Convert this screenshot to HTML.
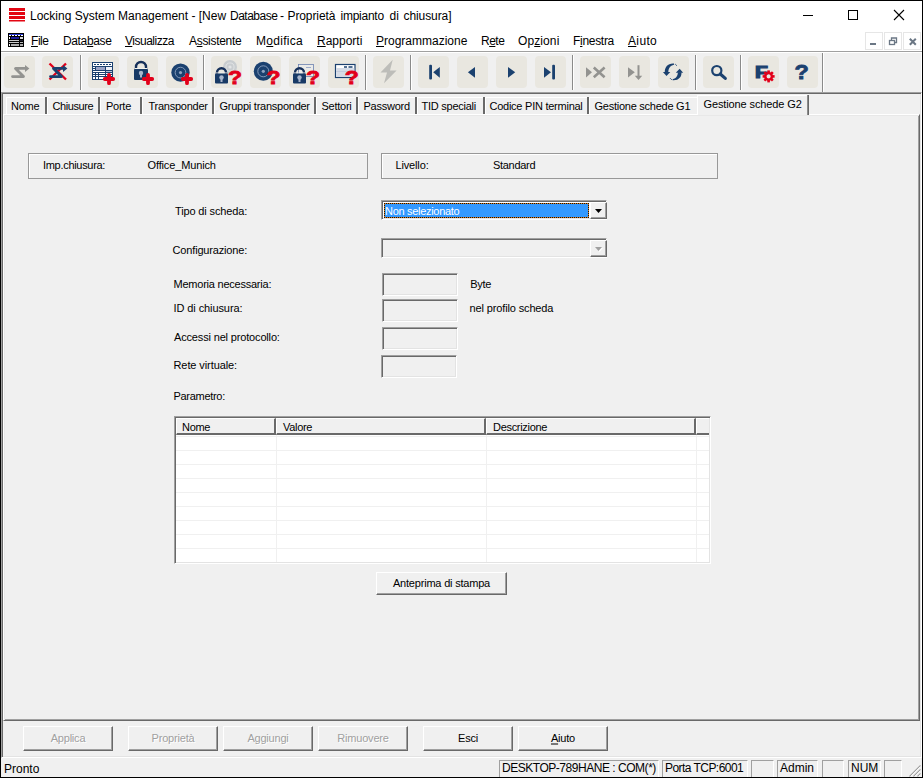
<!DOCTYPE html>
<html lang="it">
<head>
<meta charset="utf-8">
<title>Locking System Management</title>
<style>
*{box-sizing:border-box;margin:0;padding:0}
html,body{width:923px;height:778px;overflow:hidden;background:#f0f0f0}
body{position:relative;font-family:"Liberation Sans",sans-serif;font-size:11px;color:#000;line-height:1;letter-spacing:-0.3px}
.a{position:absolute;white-space:nowrap}
u{text-decoration:underline;text-underline-offset:1px}
/* window frame */
#frame{left:0;top:0;width:923px;height:778px;border:1px solid #000;pointer-events:none;z-index:50}
#title{left:1px;top:1px;width:921px;height:30px;background:#fff}
#menu{left:1px;top:31px;width:921px;height:20px;background:#fff}
.t12{font-size:12px;letter-spacing:0}
.mi{top:35px}
.tt{top:10px}
#toolbar{left:1px;top:51px;width:921px;height:41px;background:#f0f0f0;border-top:1px solid #a0a0a0;box-shadow:inset 0 1px 0 #fff,inset -1px 0 0 #fff}
.tb{position:absolute;top:56px;width:31px;height:32px;background:#e9e7e0;border-radius:4px}
.tb svg{position:absolute;left:0;top:0}
.sep{position:absolute;top:55px;width:2px;height:35px;border-left:1px solid #8a8a8a;border-right:1px solid #fff}
/* mdi */
#mdi{left:1px;top:92px;width:921px;height:666px;border:1px solid;border-color:#a0a0a0 #fff #fff #a0a0a0;box-shadow:inset 1px 1px 0 #696969,inset -1px -1px 0 #e3e3e3;background:#f0f0f0}
.tab{position:absolute;top:106px;letter-spacing:-0.25px;transform:translateY(-50%);font-size:11px}
.tsep{position:absolute;top:97px;width:2px;height:17px;background:#696969}
.tbd{position:absolute;top:97px;height:17px;border-top:1px solid #fff;border-left:1px solid #fff}
#page{left:3px;top:114px;width:917px;height:607px;border:1px solid;border-color:#fff #696969 #696969 #fff;box-shadow:inset 1px 1px 0 #e8e8e8,inset -1px -1px 0 #a0a0a0}
.sunk{position:absolute;border:1px solid #989898;box-shadow:inset 1px 1px 0 #fff}
.lbl{position:absolute;white-space:nowrap;transform:translateY(-50%)}
.edit{position:absolute;border:1px solid;border-color:#a0a0a0 #fff #fff #a0a0a0;box-shadow:inset 1px 1px 0 #696969, inset -1px -1px 0 #e3e3e3;background:#f0f0f0}
.btn{letter-spacing:-0.2px;position:absolute;border:1px solid;border-color:#fff #696969 #696969 #fff;box-shadow:inset -1px -1px 0 #a0a0a0;background:#f0f0f0;text-align:center}
.btn span{position:absolute;left:0;right:0;top:50%;transform:translateY(-50%);margin-top:-1px}
.dis{color:#a0a0a0;text-shadow:1px 1px 0 #fff}
#status{left:1px;top:758px;width:921px;height:19px;background:#f0f0f0}
.sp{position:absolute;top:760px;height:17px;border-top:1px solid #a0a0a0;border-left:1px solid #a0a0a0;border-right:1px solid #fff;font-size:12px;padding-left:2px;line-height:15px;white-space:nowrap;letter-spacing:0;overflow:hidden}
.hd{top:418px;height:17px;background:#f0f0f0;border-top:1px solid #fff;border-left:1px solid #fff;border-right:2px solid #696969;border-bottom:2px solid #696969;padding:3px 0 0 6px;line-height:11px}
.cb{width:17px;height:17px;background:#f0f0f0;border:1px solid;border-color:#fff #696969 #696969 #fff;box-shadow:inset -1px -1px 0 #a0a0a0}
</style>
</head>
<body>
<div class="a" id="title"></div>
<svg class="a" style="left:9px;top:8px" width="17" height="14" viewBox="0 0 17 14"><rect x="0" y="0" width="16" height="3" fill="#e30613"/><rect x="0" y="4" width="16" height="3" fill="#e30613"/><rect x="0" y="8" width="16" height="3" fill="#e30613"/><rect x="0" y="12" width="16" height="1.5" fill="#e30613"/></svg>
<div class="a t12 tt" id="ttA" style="left:30px">Locking System Management - [New</div>
<div class="a t12 tt" id="ttB" style="left:230px;letter-spacing:-0.5px">Database</div>
<div class="a t12 tt" id="ttC" style="left:280px">-</div>
<div class="a t12 tt" id="ttD" style="left:287.500px;letter-spacing:-0.1px">Proprietà</div>
<div class="a t12 tt" id="ttE" style="left:340.500px;letter-spacing:-0.25px">impianto</div>
<div class="a t12 tt" id="ttF" style="left:389.500px">di</div>
<div class="a t12 tt" id="ttG" style="left:403.500px;letter-spacing:-0.08px">chiusura]</div>
<svg class="a" style="left:800px;top:8px" width="110" height="16" viewBox="0 0 110 16" fill="none" stroke="#000" stroke-width="1"><path d="M3 7.500H13"/><rect x="48.500" y="2.500" width="9" height="9"/><path d="M94 2L104 12M104 2L94 12" stroke-width="1.100"/></svg>
<div class="a" id="menu"></div>
<svg class="a" style="left:8px;top:33px" width="16" height="14" viewBox="0 0 16 14"><rect x="0" y="0" width="16" height="14" fill="#000"/><rect x="1" y="1" width="14" height="1" fill="#2a3bd8"/><path d="M1 2.500h14" stroke="#fff" stroke-width="1" stroke-dasharray="2 1"/><rect x="1" y="4" width="1" height="2" fill="#fff"/><rect x="3" y="4" width="8" height="2" fill="#1c1c9c"/><rect x="12" y="4" width="3" height="2" fill="#ddd"/><rect x="1" y="7" width="10" height="1" fill="#c8c8c8"/><rect x="12" y="7" width="3" height="1" fill="#223"/><rect x="1" y="9" width="10" height="1" fill="#c8c8c8"/><rect x="12" y="9" width="3" height="1" fill="#bbb"/><rect x="1" y="11" width="1" height="2" fill="#fff"/><rect x="3" y="11" width="8" height="2" fill="#aaa"/><rect x="12" y="11" width="3" height="2" fill="#aaa"/></svg>
<div class="a t12 mi" id="m1" style="left:31px;letter-spacing:-0.45px"><u>F</u>ile</div>
<div class="a t12 mi" id="m2" style="left:63px;letter-spacing:-0.36px">Data<u>b</u>ase</div>
<div class="a t12 mi" id="m3" style="left:125px;letter-spacing:-0.5px"><u>V</u>isualizza</div>
<div class="a t12 mi" id="m4" style="left:189px;letter-spacing:-0.3px">A<u>s</u>sistente</div>
<div class="a t12 mi" id="m5" style="left:256px;letter-spacing:0.3px">M<u>o</u>difica</div>
<div class="a t12 mi" id="m6" style="left:317px"><u>R</u>apporti</div>
<div class="a t12 mi" id="m7" style="left:376px"><u>P</u>rogrammazione</div>
<div class="a t12 mi" id="m8" style="left:481px;letter-spacing:-0.5px">R<u>e</u>te</div>
<div class="a t12 mi" id="m9" style="left:518px;letter-spacing:0.1px">Op<u>z</u>ioni</div>
<div class="a t12 mi" id="m10" style="left:573px;letter-spacing:-0.3px">F<u>i</u>nestra</div>
<div class="a t12 mi" id="m11" style="left:628px;letter-spacing:0.35px"><u>A</u>iuto</div>
<svg class="a" style="left:864px;top:31px" width="58" height="20" viewBox="0 0 58 20"><g fill="none" stroke="#e6e6e6"><rect x="1.500" y="1.500" width="17" height="17"/><rect x="20.500" y="1.500" width="17" height="17"/><rect x="39.500" y="1.500" width="17" height="17"/></g><path d="M6 13h6" stroke="#6b7785" stroke-width="2"/><g fill="none" stroke="#6b7785" stroke-width="1.300"><rect x="25.500" y="9.500" width="5" height="4"/><path d="M27.500 9V7h5v4.500h-1.500"/></g><path d="M45.800 7.800l6 6M51.800 7.800l-6 6" stroke="#6b7785" stroke-width="2"/></svg>
<div class="a" id="toolbar"></div>
<!--TB-->
<div class="tb" style="left:4px;width:30.5px"><svg style="left:0px" width="32" height="32" viewBox="0 0 32 32"><path d="M8.500 20.600H19.500L11.500 12.400H22" fill="none" stroke="#939390" stroke-width="2.800" stroke-linecap="round" stroke-linejoin="round"/><path d="M21 8.900L25.400 12.400L21 15.900Z" fill="#939390"/></svg></div>
<div class="tb" style="left:41.5px;width:31.5px"><svg style="left:0.5px" width="32" height="32" viewBox="0 0 32 32"><path d="M7.500 7.500L24 23.500M24 7.500L7.500 23.500" stroke="#e2001a" stroke-width="2.400" fill="none"/><path d="M8.500 20.600H19.500L11.500 12.400H22" fill="none" stroke="#1b416f" stroke-width="2.800" stroke-linecap="round" stroke-linejoin="round"/><path d="M21 8.900L25.400 12.400L21 15.900Z" fill="#1b416f"/></svg></div>
<div class="sep" style="left:80px"></div>
<div class="tb" style="left:87.5px;width:31.5px"><svg style="left:0.5px" width="32" height="32" viewBox="0 0 32 32"><rect x="4" y="6" width="21" height="18" fill="#1b416f"/><rect x="5" y="7" width="19" height="3" fill="#fff"/><path d="M6 8.500h17" stroke="#1b416f" stroke-width="1" stroke-dasharray="2 1"/><rect x="5" y="11" width="2" height="1" fill="#fff"/><rect x="5" y="13" width="2" height="1" fill="#fff"/><rect x="8" y="11" width="9" height="3" fill="#9aa3c4"/><rect x="18" y="11" width="6" height="3" fill="#eef0f6"/><rect x="5" y="15" width="12" height="1" fill="#fff"/><rect x="18" y="15" width="6" height="1" fill="#b9c2d8"/><rect x="5" y="17" width="2" height="1" fill="#fff"/><rect x="8" y="17" width="2" height="1" fill="#fff"/><rect x="11" y="17" width="6" height="1" fill="#fff"/><rect x="18" y="17" width="6" height="1" fill="#fff"/><rect x="5" y="19" width="2" height="1" fill="#fff"/><rect x="8" y="19" width="2" height="1" fill="#fff"/><rect x="11" y="19" width="6" height="1" fill="#fff"/><rect x="18" y="19" width="6" height="1" fill="#fff"/><rect x="5" y="21" width="2" height="2" fill="#fff"/><rect x="8" y="21" width="2" height="2" fill="#fff"/><rect x="11" y="21" width="6" height="2" fill="#fff"/><rect x="18" y="21" width="6" height="2" fill="#fff"/><path d="M16.8 23H25.2M21 18.8V27.2" stroke="#e2001a" stroke-width="3.800" stroke-linecap="round" fill="none"/></svg></div>
<div class="tb" style="left:126.5px;width:31.5px"><svg style="left:0.5px" width="32" height="32" viewBox="0 0 32 32"><path d="M9 14V11a5.0 5.0 0 0 1 10 0V14" fill="none" stroke="#16305a" stroke-width="2.400"/><rect x="8" y="12" width="12" height="1" fill="#f2f2ee"/><rect x="7" y="13" width="14" height="11" rx="1" fill="#183a66"/><circle cx="14.0" cy="17" r="2.200" fill="#a9b6cc"/><rect x="13.0" y="17" width="2" height="4.500" fill="#a9b6cc"/><path d="M16.8 23H25.2M21 18.8V27.2" stroke="#e2001a" stroke-width="3.800" stroke-linecap="round" fill="none"/></svg></div>
<div class="tb" style="left:165.5px;width:31.5px"><svg style="left:0.5px" width="32" height="32" viewBox="0 0 32 32"><circle cx="14.5" cy="16.6" r="9.2" fill="#1b416f"/><circle cx="14.5" cy="16.6" r="5.335999999999999" fill="none" stroke="#8fa3c0" stroke-width="0.900"/><circle cx="14.5" cy="16.6" r="1.600" fill="#8fa3c0"/><path d="M16.8 23H25.2M21 18.8V27.2" stroke="#e2001a" stroke-width="3.800" stroke-linecap="round" fill="none"/></svg></div>
<div class="sep" style="left:203px"></div>
<div class="tb" style="left:210.5px;width:31.5px"><svg style="left:0.5px" width="32" height="32" viewBox="0 0 32 32"><circle cx="19" cy="11" r="7" fill="#c9cdd0"/><circle cx="19" cy="11" r="4.06" fill="none" stroke="#e3e5e6" stroke-width="0.900"/><circle cx="19" cy="11" r="1.600" fill="#e3e5e6"/><path d="M6 18.5V16.7a4.5 4.5 0 0 1 9 0V18.5" fill="none" stroke="#16305a" stroke-width="2.400"/><rect x="5" y="16.5" width="11" height="1" fill="#f2f2ee"/><rect x="4" y="17.5" width="13" height="10" rx="1" fill="#183a66"/><circle cx="10.5" cy="21.5" r="2.200" fill="#a9b6cc"/><rect x="9.5" y="21.5" width="2" height="4.500" fill="#a9b6cc"/><text x="0" y="0" transform="translate(17.0,27.5) scale(1.25,1)" font-family="Liberation Sans, sans-serif" font-weight="bold" font-size="18.3" fill="#e2001a" stroke="#e2001a" stroke-width="0.800">?</text></svg></div>
<div class="tb" style="left:249.5px;width:31.5px"><svg style="left:0.5px" width="32" height="32" viewBox="0 0 32 32"><circle cx="13.3" cy="15.3" r="9.5" fill="#1b416f"/><circle cx="13.3" cy="15.3" r="5.51" fill="none" stroke="#8fa3c0" stroke-width="0.900"/><circle cx="13.3" cy="15.3" r="1.600" fill="#8fa3c0"/><text x="0" y="0" transform="translate(16.5,27.5) scale(1.25,1)" font-family="Liberation Sans, sans-serif" font-weight="bold" font-size="18.3" fill="#e2001a" stroke="#e2001a" stroke-width="0.800">?</text></svg></div>
<div class="tb" style="left:288.5px;width:31.5px"><svg style="left:0.5px" width="32" height="32" viewBox="0 0 32 32"><rect x="9.500" y="8.500" width="15" height="12" fill="#ebebe8" stroke="#6d82b0" stroke-width="0.800"/><path d="M17 11.500h5" stroke="#8a9ac0" stroke-width="0.800"/><path d="M6 18.5V16.7a4.5 4.5 0 0 1 9 0V18.5" fill="none" stroke="#16305a" stroke-width="2.400"/><rect x="5" y="16.5" width="11" height="1" fill="#f2f2ee"/><rect x="4" y="17.5" width="13" height="10" rx="1" fill="#183a66"/><circle cx="10.5" cy="21.5" r="2.200" fill="#a9b6cc"/><rect x="9.5" y="21.5" width="2" height="4.500" fill="#a9b6cc"/><text x="0" y="0" transform="translate(17.0,27.5) scale(1.25,1)" font-family="Liberation Sans, sans-serif" font-weight="bold" font-size="18.3" fill="#e2001a" stroke="#e2001a" stroke-width="0.800">?</text></svg></div>
<div class="tb" style="left:327.5px;width:31.5px"><svg style="left:0.5px" width="32" height="32" viewBox="0 0 32 32"><rect x="7.500" y="8.500" width="19.500" height="13" fill="#fff" stroke="#1b416f" stroke-width="1.200"/><rect x="8.200" y="12" width="18" height="9" fill="#d5dbe6"/><rect x="8.200" y="15" width="18" height="1" fill="#c3cbdc"/><path d="M16 11h3M20.500 11h4" stroke="#1b416f" stroke-width="1.400"/><text x="0" y="0" transform="translate(16.8,27.7) scale(1.25,1)" font-family="Liberation Sans, sans-serif" font-weight="bold" font-size="18.3" fill="#e2001a" stroke="#e2001a" stroke-width="0.800">?</text></svg></div>
<div class="sep" style="left:365px"></div>
<div class="tb" style="left:372.5px;width:31.5px"><svg style="left:0.5px" width="32" height="32" viewBox="0 0 32 32"><path d="M19.700 3.800L7.500 16.500H14L11 27.200L23.600 14.500H17Z" fill="#bdbdb9"/></svg></div>
<div class="sep" style="left:410px"></div>
<div class="tb" style="left:417.5px;width:31.5px"><svg style="left:0.5px" width="32" height="32" viewBox="0 0 32 32"><rect x="11.200" y="8.800" width="2.800" height="14.800" rx="1" fill="#1b416f"/><path d="M15.200 16.200L21.800 11V21.800Z" fill="#1b416f"/></svg></div>
<div class="tb" style="left:456.5px;width:31.5px"><svg style="left:0.5px" width="32" height="32" viewBox="0 0 32 32"><path d="M10.900 16.200L18 11V21.800Z" fill="#1b416f"/></svg></div>
<div class="tb" style="left:495.5px;width:31.5px"><svg style="left:0.5px" width="32" height="32" viewBox="0 0 32 32"><path d="M19.200 16.200L12 11V21.800Z" fill="#1b416f"/></svg></div>
<div class="tb" style="left:534.5px;width:31.5px"><svg style="left:0.5px" width="32" height="32" viewBox="0 0 32 32"><path d="M16 16.200L9 11V21.800Z" fill="#1b416f"/><rect x="17.200" y="8.800" width="2.800" height="14.800" rx="1" fill="#1b416f"/></svg></div>
<div class="sep" style="left:572px"></div>
<div class="tb" style="left:579.5px;width:31.5px"><svg style="left:0.5px" width="32" height="32" viewBox="0 0 32 32"><path d="M12 16.200L6 11.200V21.400Z" fill="#939390"/><path d="M13.800 11.500L24.600 21.200M24.600 11.500L13.800 21.200" stroke="#939390" stroke-width="2.600" fill="none"/></svg></div>
<div class="tb" style="left:618.5px;width:31.5px"><svg style="left:0.5px" width="32" height="32" viewBox="0 0 32 32"><path d="M15.800 16.200L9 11.200V21.400Z" fill="#939390"/><path d="M19.500 9.200V22" stroke="#939390" stroke-width="2" fill="none"/><path d="M15.800 19.800H23.200L19.500 24Z" fill="#939390"/></svg></div>
<div class="tb" style="left:657.5px;width:31.5px"><svg style="left:0.5px" width="32" height="32" viewBox="0 0 32 32"><path d="M16 7.500C10 7 6.500 11 6.800 16.500L10.300 16.500C10.300 12.500 12 9.600 16 8.700Z" fill="#1b416f"/><path d="M4.900 16.100L12.300 16.100L8.500 20Z" fill="#1b416f"/><path d="M14.600 24.300C20.600 24.800 24 20.800 23.400 16.300L19.800 16.300C19.900 19.500 18.600 22.300 14.600 23.200Z" fill="#1b416f"/><path d="M17.800 16.700L25.200 16.700L21.600 12.800Z" fill="#1b416f"/><circle cx="17.300" cy="8.300" r="0.500" fill="#1b416f"/><circle cx="18.500" cy="9.300" r="0.500" fill="#1b416f"/><circle cx="13.400" cy="23.400" r="0.500" fill="#1b416f"/><circle cx="12.300" cy="22.400" r="0.500" fill="#1b416f"/></svg></div>
<div class="sep" style="left:695px"></div>
<div class="tb" style="left:702.5px;width:31.5px"><svg style="left:0.5px" width="32" height="32" viewBox="0 0 32 32"><circle cx="13.800" cy="14.600" r="4.600" fill="none" stroke="#1b416f" stroke-width="2.200"/><path d="M17.300 18L22.300 22.400" stroke="#1b416f" stroke-width="3.200" stroke-linecap="round"/></svg></div>
<div class="sep" style="left:740px"></div>
<div class="tb" style="left:747.5px;width:31.5px"><svg style="left:0.5px" width="32" height="32" viewBox="0 0 32 32"><text transform="translate(7.100,21.800) scale(1.320,1)" font-family="Liberation Sans, sans-serif" font-weight="bold" font-size="16" fill="#1b416f" stroke="#1b416f" stroke-width="1.200" stroke-linejoin="miter">F</text><rect x="-1.300" y="-6" width="2.600" height="3.500" fill="#e2001a" transform="translate(20.6,20.4) rotate(0)"/><rect x="-1.300" y="-6" width="2.600" height="3.500" fill="#e2001a" transform="translate(20.6,20.4) rotate(45)"/><rect x="-1.300" y="-6" width="2.600" height="3.500" fill="#e2001a" transform="translate(20.6,20.4) rotate(90)"/><rect x="-1.300" y="-6" width="2.600" height="3.500" fill="#e2001a" transform="translate(20.6,20.4) rotate(135)"/><rect x="-1.300" y="-6" width="2.600" height="3.500" fill="#e2001a" transform="translate(20.6,20.4) rotate(180)"/><rect x="-1.300" y="-6" width="2.600" height="3.500" fill="#e2001a" transform="translate(20.6,20.4) rotate(225)"/><rect x="-1.300" y="-6" width="2.600" height="3.500" fill="#e2001a" transform="translate(20.6,20.4) rotate(270)"/><rect x="-1.300" y="-6" width="2.600" height="3.500" fill="#e2001a" transform="translate(20.6,20.4) rotate(315)"/><circle cx="20.600" cy="20.400" r="3.300" fill="none" stroke="#e2001a" stroke-width="2.400"/></svg></div>
<div class="tb" style="left:786.5px;width:31.5px"><svg style="left:0.5px" width="32" height="32" viewBox="0 0 32 32"><text x="0" y="0" transform="translate(7.5,22.9) scale(1.2,1)" font-family="Liberation Sans, sans-serif" font-weight="bold" font-size="19.5" fill="#1b416f" stroke="#1b416f" stroke-width="0.800">?</text></svg></div>
<div class="sep" style="left:822px;top:53px;height:39px"></div>
<!--/TB-->
<div class="a" id="mdi"></div>
<div class="a" id="page"></div>
<!--TABS-->
<div class="tbd" style="left:6px;width:39px"></div>
<div class="tbd" style="left:47px;width:51px"></div>
<div class="tbd" style="left:100px;width:40px"></div>
<div class="tbd" style="left:142px;width:70px"></div>
<div class="tbd" style="left:214px;width:100px"></div>
<div class="tbd" style="left:316px;width:40px"></div>
<div class="tbd" style="left:358px;width:57px"></div>
<div class="tbd" style="left:417px;width:66px"></div>
<div class="tbd" style="left:485px;width:102px"></div>
<div class="tbd" style="left:589px;width:108px"></div>
<div class="tab" id="t0" style="left:11px">Nome</div>
<div class="tab" id="t1" style="left:52.500px;letter-spacing:-0.4px">Chiusure</div>
<div class="tab" id="t2" style="left:106px">Porte</div>
<div class="tab" id="t3" style="left:148.5px">Transponder</div>
<div class="tab" id="t4" style="left:219.500px">Gruppi transponder</div>
<div class="tab" id="t5" style="left:321.5px">Settori</div>
<div class="tab" id="t6" style="left:363.5px">Password</div>
<div class="tab" id="t7" style="left:421.5px">TID speciali</div>
<div class="tab" id="t8" style="left:489.5px">Codice PIN terminal</div>
<div class="tab" id="t9" style="left:594.5px">Gestione schede G1</div>
<div class="tsep" style="left:45px"></div>
<div class="tsep" style="left:98px"></div>
<div class="tsep" style="left:140px"></div>
<div class="tsep" style="left:212px"></div>
<div class="tsep" style="left:314px"></div>
<div class="tsep" style="left:356px"></div>
<div class="tsep" style="left:415px"></div>
<div class="tsep" style="left:483px"></div>
<div class="tsep" style="left:587px"></div>
<div class="a" id="seltab" style="left:697px;top:95px;width:110px;height:20px;background:#f0f0f0;border-top:1px solid #fff;border-left:1px solid #fff"></div>
<div class="a" style="left:807px;top:95px;width:2px;height:20px;background:#696969;border-left:1px solid #8c8c8c"></div>
<div class="tab" id="t10" style="left:703.500px;top:104px;letter-spacing:-0.12px">Gestione schede G2</div>
<!--/TABS-->
<!--FORM-->
<div class="sunk" id="g1" style="left:28px;top:153px;width:340px;height:26px"></div>
<div class="sunk" id="g2" style="left:381px;top:153px;width:337px;height:26px"></div>
<div class="lbl" id="l1" style="left:43px;top:165px">Imp.chiusura:</div>
<div class="lbl" id="l2" style="left:147.5px;letter-spacing:-0.14px;top:165px">Office_Munich</div>
<div class="lbl" id="l3" style="left:395.5px;letter-spacing:-0.15px;top:165px">Livello:</div>
<div class="lbl" id="l4" style="left:493px;top:165px">Standard</div>
<div class="lbl" id="l5" style="left:175px;letter-spacing:-0.14px;top:211px">Tipo di scheda:</div>
<div class="lbl" id="l6" style="left:172.6px;letter-spacing:-0.17px;top:250px">Configurazione:</div>
<div class="lbl" id="l7" style="left:173.5px;letter-spacing:-0.23px;top:284px">Memoria necessaria:</div>
<div class="lbl" id="l8" style="left:173.5px;letter-spacing:-0.09px;top:308px">ID di chiusura:</div>
<div class="lbl" id="l9" style="left:174px;letter-spacing:-0.16px;top:337px">Accessi nel protocollo:</div>
<div class="lbl" id="l10" style="left:173.5px;letter-spacing:-0.09px;top:365px">Rete virtuale:</div>
<div class="lbl" id="l11" style="left:173.5px;letter-spacing:-0.3px;top:396px">Parametro:</div>
<div class="lbl" id="l12" style="left:470.3px;letter-spacing:-0.3px;top:284px">Byte</div>
<div class="lbl" id="l13" style="left:469.6px;letter-spacing:-0.14px;top:308px">nel profilo scheda</div>
<div class="edit" id="c1" style="left:381px;top:200px;width:226px;height:20px;background:#fff"></div>
<div class="a" id="c1s" style="left:384px;top:203px;width:205px;height:15px;background:#3399ff;box-shadow:inset 0 0 0 1px #d87a1a;outline:1px dotted #111;outline-offset:-1px"></div>
<div class="lbl" id="c1t" style="left:385px;top:211px;color:#fff">Non selezionato</div>
<div class="a cb" id="c1b" style="left:590px;top:202px"></div>
<svg class="a" style="left:595px;top:209px" width="8" height="5" viewBox="0 0 8 5"><path d="M0 0h7L3.500 4Z" fill="#000"/></svg>
<div class="edit" id="c2" style="left:381px;top:238px;width:226px;height:20px"></div>
<div class="a cb" id="c2b" style="left:590px;top:240px"></div>
<svg class="a" style="left:595px;top:247px" width="9" height="6" viewBox="0 0 9 6"><path d="M1 1h7L4.500 5Z" fill="#fff"/><path d="M0 0h7L3.500 4Z" fill="#a0a0a0"/></svg>
<div class="edit" id="e1" style="left:382px;top:273px;width:76px;height:23px"></div>
<div class="edit" id="e2" style="left:382px;top:299px;width:76px;height:23px"></div>
<div class="edit" id="e3" style="left:382px;top:327px;width:76px;height:23px"></div>
<div class="edit" id="e4" style="left:381px;top:355px;width:76px;height:23px"></div>
<div class="edit" id="lv" style="left:174px;top:416px;width:537px;height:148px;background:#fff"></div>
<div class="a" id="lvg" style="left:176px;top:435px;width:533px;height:127px;background-image:linear-gradient(#f0f0f0,#f0f0f0),linear-gradient(#f0f0f0,#f0f0f0),linear-gradient(#f0f0f0,#f0f0f0),repeating-linear-gradient(to bottom,transparent 0,transparent 13px,#f0f0f0 13px,#f0f0f0 14px);background-size:1px 100%,1px 100%,1px 100%,100% 14px;background-position:100px 0,310px 0,520px 0,0 2px;background-repeat:no-repeat,no-repeat,no-repeat,repeat-y"></div>
<div class="a hd" id="h1" style="left:176px;width:100px;padding-left:5px">Nome</div>
<div class="a hd" id="h2" style="left:276px;width:210px">Valore</div>
<div class="a hd" id="h3" style="left:486px;width:210px">Descrizione</div>
<div class="a hd" id="h4" style="left:696px;width:13px;border-right:none"></div>
<div class="btn" id="bp" style="left:376px;top:572px;width:131px;height:23px"><span>Anteprima di stampa</span></div>
<!--/FORM-->
<!--BOTTOM-->
<div class="btn dis" id="b1" style="left:23px;top:726px;width:90px;height:25px"><span>Applica</span></div>
<div class="btn dis" id="b2" style="left:128px;top:726px;width:90px;height:25px"><span>Proprietà</span></div>
<div class="btn dis" id="b3" style="left:223px;top:726px;width:90px;height:25px"><span>Aggiungi</span></div>
<div class="btn dis" id="b4" style="left:318px;top:726px;width:90px;height:25px"><span>Rimuovere</span></div>
<div class="btn" id="b5" style="left:423px;top:726px;width:90px;height:25px"><span>Esci</span></div>
<div class="btn" id="b6" style="left:518px;top:726px;width:90px;height:25px"><span><u style="text-underline-offset:2px">A</u>iuto</span></div>
<!--/BOTTOM-->
<div class="a" id="status"></div>
<div class="a t12" id="st0" style="left:4px;top:763px">Pronto</div>
<div class="sp" id="s1" style="left:499px;width:160px;letter-spacing:-0.47px">DESKTOP-789HANE : COM(*)</div>
<div class="sp" id="s2" style="left:662px;width:86px;letter-spacing:-0.55px">Porta TCP:6001</div>
<div class="sp" id="s3" style="left:751px;width:23px"></div>
<div class="sp" id="s4" style="left:777px;width:41px">Admin</div>
<div class="sp" id="s5" style="left:822px;width:22px"></div>
<div class="sp" id="s6" style="left:848px;width:33px">NUM</div>
<div class="sp" id="s7" style="left:884px;width:18px"></div>
<svg class="a" style="left:908px;top:764px" width="13" height="13" viewBox="0 0 13 13"><path d="M12.500 1.500L1.500 12.500M12.500 5.500L5.500 12.500M12.500 9.500L9.500 12.500" stroke="#a0a0a0" stroke-width="1.200"/><path d="M12.500 2.500L2.500 12.500M12.500 6.500L6.500 12.500M12.500 10.500L10.500 12.500" stroke="#fff" stroke-width="0.800"/></svg>
<div class="a" id="frame"></div>
</body>
</html>
